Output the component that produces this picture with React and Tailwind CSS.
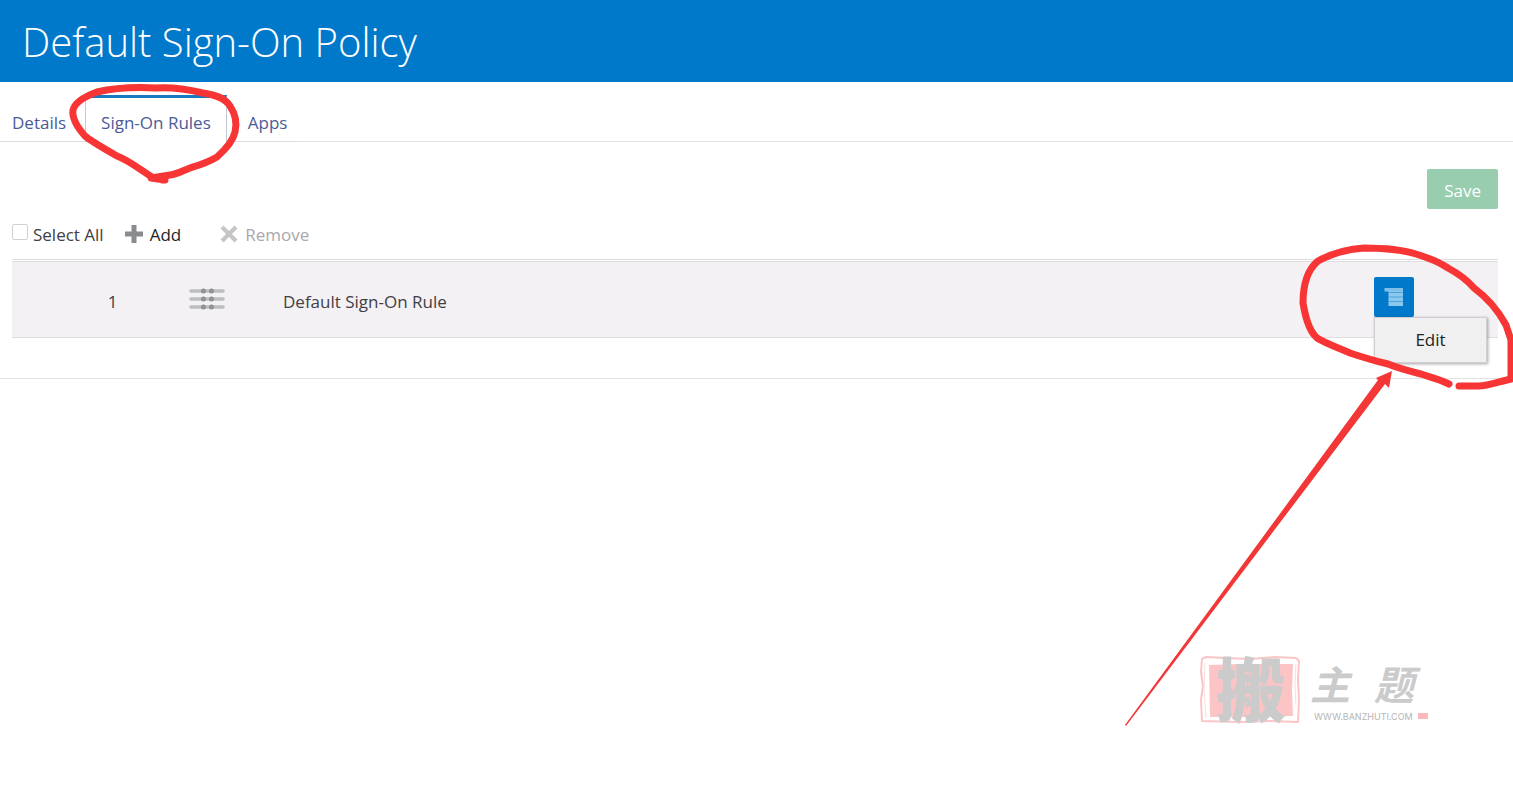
const TABS = [
  { label: 'Details', selected: false },
  { label: 'Sign-On Rules', selected: true },
  { label: 'Apps', selected: false },
];

function PlusIcon() {
  return (
    <svg width="18" height="18" viewBox="0 0 18 18" aria-hidden="true">
      <path d="M6.500 0h5v6.500H18v5h-6.500V18h-5v-6.500H0v-5h6.500z" fill="#8a8b8e" />
    </svg>
  );
}

function CrossIcon() {
  return (
    <svg width="18" height="18" viewBox="0 0 18 18" aria-hidden="true">
      <path d="M3.500 3.500l11 11M14.500 3.500l-11 11" stroke="#c6c6c8" strokeWidth="4.200" strokeLinecap="square" />
    </svg>
  );
}

function GripIcon() {
  return (
    <svg width="36" height="22" viewBox="0 0 36 22" aria-label="Reorder" role="img">
      {[3, 11, 19].map((y) => (
        <g key={y}>
          <path d={`M2 ${y}H34`} stroke="#bdbcbf" strokeWidth="3.500" strokeLinecap="round" />
          <circle cx="14.500" cy={y} r="2.500" fill="#929195" />
          <circle cx="22.500" cy={y} r="2.500" fill="#929195" />
        </g>
      ))}
    </svg>
  );
}

function MenuIcon() {
  return (
    <svg width="20" height="18" viewBox="0 0 20 18" aria-hidden="true">
      <path d="M0.500 0h18.500v3.500H0.500z" fill="#7fc0ea" />
      <path d="M4.500 3h14.500v15H4.500z" fill="#8cc8ee" />
      <path d="M4.500 4.500h14.500M4.500 9h14.500M4.500 13.500h14.500" stroke="#4ba3de" strokeWidth="1" />
    </svg>
  );
}

function TabMark() {
  return (
    <svg className="pointer-events-none absolute left-0 top-20" width="260" height="110" viewBox="0 80 260 110" aria-hidden="true">
      <path
        d="M162 180L152 177C138 168 128 160 117 156C103 148 91 141 85 136C77 127 72 117 73 110C75 102 86 96 97 92C118 87 138 87 157 88C174 87 190 90 203 93C216 95 225 98 230 106C236 115 237 124 235 132C233 141 226 149 217 157C207 163 200 165 190 168C182 171 178 174 170 175L151 178L165 180"
        fill="none" stroke="#f73535" strokeWidth="7" strokeLinecap="round" strokeLinejoin="round"
      />
    </svg>
  );
}

function MenuMark() {
  return (
    <svg className="pointer-events-none absolute right-0 top-60" width="413" height="490" viewBox="1100 240 413 490" aria-hidden="true">
      <path
        d="M1449 384C1439 379 1430 377 1421 374C1405 370 1398 368 1388 364C1371 360 1362 357 1350 353C1336 347 1325 343 1317 338C1308 330 1305 314 1303 303C1303 286 1306 271 1318 261C1333 253 1348 249 1364 248C1384 248 1400 249 1416 254C1429 258 1439 262 1448 268C1461 275 1468 281 1474 288C1489 299 1499 312 1506 325L1511 340V379C1498 382 1488 386 1478 386H1459"
        fill="none" stroke="#f73535" strokeWidth="7" strokeLinecap="round" strokeLinejoin="round"
      />
      <path d="M1125 725L1378 380L1376 378L1392 371L1389 388L1385 384L1126 726Z" fill="#f33737" />
    </svg>
  );
}

function Watermark() {
  return (
    <svg className="pointer-events-none absolute right-20 top-[620px]" width="240" height="130" viewBox="1193 620 240 130" aria-label="搬主题" role="img">
      <path d="M1202 659L1206 657L1225 658L1250 659L1275 657L1296 658L1299 661L1298 680L1299 700L1298 722L1270 721L1240 722L1202 721L1201 700L1203 686L1201 672Z" fill="none" stroke="#fbc5c7" strokeWidth="2" strokeLinejoin="round" />
      <path d="M1205 663L1204 690L1206 718M1296 664L1295 685L1296 705" fill="none" stroke="#fddcdd" strokeWidth="1" />
      <path d="M1209 665L1240 664L1293 664L1292 690L1293 716L1250 717L1210 717Z" fill="#fdc4c6" />
      <g fill="#cbcbcb" fontFamily="'Noto Sans CJK SC', sans-serif">
        <text x="1216" y="717" fontSize="70" fontWeight="900">搬</text>
        <text x="1310" y="700" fontSize="40" fontWeight="700" fontStyle="italic">主</text>
        <text x="1374" y="700" fontSize="40" fontWeight="700" fontStyle="italic">题</text>
      </g>
      <text x="1314" y="720" fontSize="9" fill="#b5b5b5" fontFamily="Inter, sans-serif">WWW.BANZHUTI.COM</text>
      <path d="M1418 713h10v6h-10z" fill="#fbb9bc" />
    </svg>
  );
}

export default function App() {
  return (
    <div className="relative min-h-screen overflow-x-hidden bg-white font-['Open_Sans',sans-serif] text-[17px] leading-6 text-[#414045]">
      <header className="flex h-[82px] items-center bg-[#0079ca] px-[22px] pt-0.5">
        <h1 className="whitespace-nowrap text-[40px] font-light leading-none text-white">Default Sign-On Policy</h1>
      </header>

      <nav aria-label="Policy sections" className="flex h-[60px] items-stretch pt-[13px]">
        {TABS.map(({ label, selected }) => (
          <a
            key={label}
            href="#"
            aria-current={selected ? 'page' : undefined}
            className={
              selected
                ? 'flex items-center whitespace-nowrap border-x border-t-[3px] border-x-[#c5cad2] border-t-[#1979bf] px-[15px] pt-1.5 text-[#4a5b98]'
                : 'flex items-center whitespace-nowrap border-b border-b-[#dcdfe4] px-3 pt-2.5 text-[#4a5b98] first:pr-[19px] last-of-type:pl-[21px]'
            }
          >
            {label}
          </a>
        ))}
        <span className="grow border-b border-[#e0e0e3]" />
      </nav>

      <main className="border-b border-[#e2e2e2] pb-10 pl-3 pr-[15px] pt-[27px]">
        <div className="flex justify-end">
          <button type="button" disabled className="h-10 rounded-xs bg-[#99cdb0] px-[17px] pt-1 text-white">Save</button>
        </div>

        <div className="flex h-[50px] items-center">
          <label className="flex items-center gap-[5px] whitespace-nowrap">
            <input type="checkbox" className="mb-1 size-4 appearance-none rounded-xs border border-[#d3cfd6] bg-white" />
            <span className="pt-px">Select All</span>
          </label>
          <button type="button" className="ml-[21px] flex items-center gap-[7px] text-[#222225]">
            <PlusIcon />
            <span className="pt-0.5">Add</span>
          </button>
          <button type="button" disabled className="ml-[39px] flex items-center gap-[7px] text-[#a9a9ac]">
            <CrossIcon />
            <span className="pt-0.5">Remove</span>
          </button>
        </div>

        <div className="border-t border-[#dedde0] pt-px">
          <table className="w-full border-collapse" aria-label="Sign-on rules">
            <tbody>
              <tr className="h-[76px] border-y border-[#dedde0] bg-[#f3f1f4]">
                <td className="w-[177px] pl-6 pt-1 text-center">1</td>
                <td className="w-[94px] pb-0.5"><GripIcon /></td>
                <td className="pt-1">Default Sign-On Rule</td>
                <td className="w-[124px]">
                  <div className="relative mb-[6px] size-10">
                    <button type="button" aria-label="Rule actions" aria-expanded="true" className="flex size-10 items-center justify-center rounded-xs bg-[#0079ca]">
                      <MenuIcon />
                    </button>
                    <div role="menu" className="absolute left-0 top-full z-10 h-[46px] w-[113px] border border-[#d0ced1] bg-[#f1f0f1] shadow-[1px_1px_3px_rgba(0,0,0,0.35)]">
                      <button type="button" role="menuitem" className="size-full text-[#222225]">Edit</button>
                    </div>
                  </div>
                </td>
              </tr>
            </tbody>
          </table>
        </div>
      </main>

      <div className="pointer-events-none absolute inset-0 z-20">
        <TabMark />
        <Watermark />
        <MenuMark />
      </div>
    </div>
  );
}
